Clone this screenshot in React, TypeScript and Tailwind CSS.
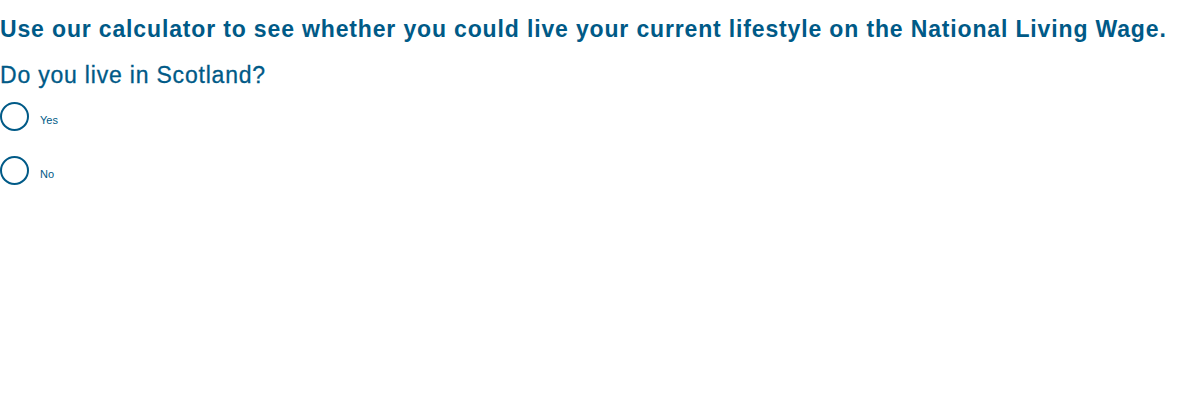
import { useState } from "react";

const OPTIONS = ["Yes", "No"];

export default function App() {
  const [value, setValue] = useState<string | null>(null);

  return (
    <div className="min-h-screen bg-white text-[#005a87] font-['Liberation_Sans',Arial,sans-serif]">
      <h1 className="pt-[14px] text-[23px] font-bold leading-[30px] tracking-[0.85px]">
        Use our calculator to see whether you could live your current lifestyle on the National Living Wage.
      </h1>

      <fieldset className="mt-[16px]">
        <legend className="text-[23px] leading-[30px] tracking-[0.8px] [-webkit-text-stroke:0.3px_#005a87]">
          Do you live in Scotland?
        </legend>
        <div className="mt-[12px] flex flex-col gap-[25px]">
          {OPTIONS.map((opt) => (
            <label key={opt} className="flex items-center gap-[11px] cursor-pointer">
              <span className="w-[29px] h-[29px] rounded-full border-2 border-[#005a87] flex items-center justify-center">
                {value === opt && <span className="w-[15px] h-[15px] rounded-full bg-[#005a87]" />}
              </span>
              <input
                type="radio"
                name="scotland"
                className="sr-only"
                checked={value === opt}
                onChange={() => setValue(opt)}
              />
              <span className="text-[11px] leading-[14px] pt-[7px]">{opt}</span>
            </label>
          ))}
        </div>
      </fieldset>
    </div>
  );
}
